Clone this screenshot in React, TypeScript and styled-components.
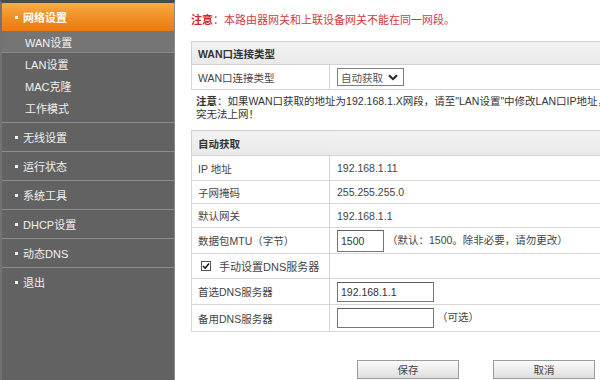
import React from "react";
import styled, { createGlobalStyle } from "styled-components";

const GlobalStyle = createGlobalStyle`
  html, body {
    margin: 0;
    padding: 0;
    background: #fff;
  }
  body {
    font-family: "Liberation Sans", "Noto Sans CJK SC", sans-serif;
  }
`;

const Page = styled.div`
  display: flex;
  width: 600px;
  height: 380px;
  overflow: hidden;
`;

const Sidebar = styled.nav`
  flex: 0 0 175px;
  box-sizing: border-box;
  background: #626262;
  border-top: 3px solid #4b4b4b;
  border-left: 2px solid #727272;
  border-right: 1px solid #8c8c8c;
  color: #f0f0f0;
  font-size: 11px;
`;

const Bullet = styled.span`
  display: inline-block;
  width: 3px;
  height: 3px;
  margin: 0 5px 0 13px;
  background: #f4f4f4;
  vertical-align: middle;
`;

const GroupHead = styled.div`
  display: flex;
  align-items: center;
  height: 28px;
  background: linear-gradient(#f8ac44, #f08d22 55%, #e97a16);
  color: #fff;
  font-weight: bold;
`;

const SubList = styled.div`
  padding-bottom: 3px;
`;

const SubItem = styled.div<{ $active?: boolean }>`
  display: flex;
  align-items: center;
  height: 22px;
  padding-left: 23px;
  background: ${(p) => (p.$active ? "#757575" : "transparent")};
  border-bottom: 1px solid ${(p) => (p.$active ? "#8a8a8a" : "transparent")};
  box-sizing: border-box;
`;

const MenuItem = styled.div`
  display: flex;
  align-items: center;
  height: 29px;
  box-sizing: border-box;
  border-top: 1px solid #8d8d8d;
`;

const Main = styled.main`
  flex: 1;
  min-width: 0;
  padding: 13px 0 0 16px;
  color: #444;
  font-size: 10.5px;
`;

const Warning = styled.div`
  height: 14px;
  line-height: 14px;
  font-size: 11px;
  color: #d23a3f;
  white-space: nowrap;

  b {
    color: #d0262a;
  }
`;

const Table = styled.table<{ $top: number }>`
  width: 440px;
  margin-top: ${(p) => p.$top}px;
  border-collapse: collapse;
  border: 1px solid #d2d2d2;
  table-layout: fixed;
`;

const HeadCell = styled.th<{ $h: number }>`
  height: ${(p) => p.$h}px;
  padding: 0 0 0 6px;
  text-align: left;
  font-weight: bold;
  color: #333;
  background: linear-gradient(#f3f3f3, #e9e9e9);
  border-bottom: 1px solid #d2d2d2;
`;

const Row = styled.tr<{ $h?: number }>`
  height: ${(p) => p.$h ?? 24}px;
`;

const Label = styled.td`
  padding: 0 0 0 6px;
  border: 1px solid #d6d6d6;
  white-space: nowrap;
`;

const Value = styled.td`
  padding: 0 0 0 7px;
  border: 1px solid #d6d6d6;
  white-space: nowrap;
`;

const SelectBox = styled.div`
  display: inline-flex;
  align-items: center;
  gap: 5px;
  height: 18px;
  box-sizing: border-box;
  padding: 0 5px 0 3px;
  border: 1px solid #7d7d7d;
  color: #555;
  font-size: 10.5px;

  svg {
    flex-shrink: 0;
  }
`;

const Note = styled.div`
  margin: 5px 0 0 5px;
  line-height: 13px;
  color: #333;
  white-space: nowrap;
`;

const Field = styled.input<{ $w: number; $h: number }>`
  width: ${(p) => p.$w}px;
  height: ${(p) => p.$h}px;
  box-sizing: border-box;
  margin: 0 3px 0 0;
  padding: 0 3px;
  border: 1px solid #767676;
  border-top-color: #5e5e5e;
  font: 10.5px "Liberation Sans", "Noto Sans CJK SC", sans-serif;
  color: #333;
  vertical-align: middle;
  outline: none;
`;

const Check = styled.label`
  display: inline-flex;
  align-items: center;
  gap: 8px;
  padding-left: 3px;
  font-size: 11px;
  color: #444;
`;

const CheckBox = styled.span`
  display: inline-flex;
  align-items: center;
  justify-content: center;
  width: 10px;
  height: 10px;
  box-sizing: border-box;
  border: 1px solid #555;
  background: #fff;
`;

const Buttons = styled.div`
  display: flex;
  gap: 34px;
  margin: 28px 0 0 166px;
`;

const Button = styled.button`
  flex: 0 0 102px;
  height: 19px;
  padding: 0;
  border: 1px solid #9c9c9c;
  background: linear-gradient(#fbfbfb, #dedede);
  color: #444;
  font: 10.5px "Liberation Sans", "Noto Sans CJK SC", sans-serif;
`;

const subItems = ["WAN设置", "LAN设置", "MAC克隆", "工作模式"];
const menuItems = ["无线设置", "运行状态", "系统工具", "DHCP设置", "动态DNS", "退出"];

const Cols = () => (
  <colgroup>
    <col style={{ width: 138 }} />
    <col />
  </colgroup>
);

export default function App() {
  return (
    <>
      <GlobalStyle />
      <Page>
        <Sidebar>
          <GroupHead>
            <Bullet />
            网络设置
          </GroupHead>
          <SubList>
            {subItems.map((s, i) => (
              <SubItem key={s} $active={i === 0}>
                {s}
              </SubItem>
            ))}
          </SubList>
          {menuItems.map((m) => (
            <MenuItem key={m}>
              <Bullet />
              {m}
            </MenuItem>
          ))}
        </Sidebar>

        <Main>
          <Warning>
            <b>注意</b>：本路由器网关和上联设备网关不能在同一网段。
          </Warning>

          <Table $top={14}>
            <Cols />
            <thead>
              <tr>
                <HeadCell $h={22}>WAN口连接类型</HeadCell>
                <HeadCell $h={22} />
              </tr>
            </thead>
            <tbody>
              <Row $h={25}>
                <Label>WAN口连接类型</Label>
                <Value>
                  <SelectBox>
                    自动获取
                    <svg width="10" height="7" viewBox="0 0 10 7">
                      <path d="M1 1.2 L5 5.2 L9 1.2" fill="none" stroke="#222" strokeWidth="2" />
                    </svg>
                  </SelectBox>
                </Value>
              </Row>
            </tbody>
          </Table>

          <Note>
            <b>注意</b>：如果WAN口获取的地址为192.168.1.X网段，请至"LAN设置"中修改LAN口IP地址，以免冲
            <br />
            突无法上网！
          </Note>

          <Table $top={9}>
            <Cols />
            <thead>
              <tr>
                <HeadCell $h={24}>自动获取</HeadCell>
                <HeadCell $h={24} />
              </tr>
            </thead>
            <tbody>
              <Row $h={25}>
                <Label>IP 地址</Label>
                <Value>192.168.1.11</Value>
              </Row>
              <Row $h={23}>
                <Label>子网掩码</Label>
                <Value>255.255.255.0</Value>
              </Row>
              <Row>
                <Label>默认网关</Label>
                <Value>192.168.1.1</Value>
              </Row>
              <Row $h={26}>
                <Label>数据包MTU（字节）</Label>
                <Value>
                  <Field $w={47} $h={22} defaultValue="1500" />
                  （默认：1500。除非必要，请勿更改）
                </Value>
              </Row>
              <Row $h={25}>
                <Label>
                  <Check>
                    <CheckBox>
                      <svg width="8" height="8" viewBox="0 0 8 8">
                        <path d="M1 4 L3.2 6.2 L7 1.5" fill="none" stroke="#111" strokeWidth="1.5" />
                      </svg>
                    </CheckBox>
                    手动设置DNS服务器
                  </Check>
                </Label>
                <Value />
              </Row>
              <Row $h={26}>
                <Label>首选DNS服务器</Label>
                <Value>
                  <Field $w={97} $h={20} defaultValue="192.168.1.1" />
                </Value>
              </Row>
              <Row $h={27}>
                <Label>备用DNS服务器</Label>
                <Value>
                  <Field $w={97} $h={20} defaultValue="" />
                  （可选）
                </Value>
              </Row>
            </tbody>
          </Table>

          <Buttons>
            <Button>保存</Button>
            <Button>取消</Button>
          </Buttons>
        </Main>
      </Page>
    </>
  );
}
